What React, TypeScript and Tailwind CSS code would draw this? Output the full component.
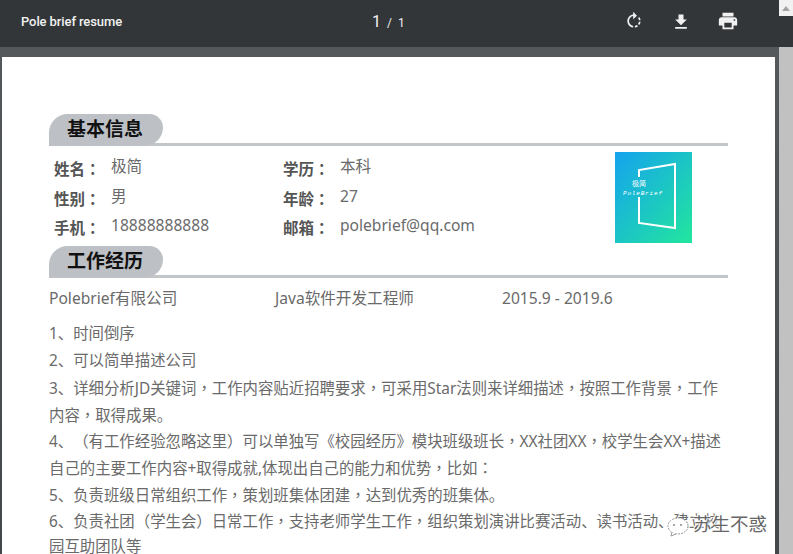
import type { ReactNode } from "react";

function Punct({ text }: { text: string }): ReactNode {
  return (
    <>
      {text.split(/([，：])/).map((part, i) =>
        part === "，" || part === "：" ? (
          <span key={i} className="[font-family:'Noto_Sans_CJK_TC',sans-serif]">{part}</span>
        ) : (
          <span key={i}>{part}</span>
        )
      )}
    </>
  );
}

function Heading({ children }: { children: string }) {
  return (
    <div className="border-b-[3px] border-[#c3c6c9] h-[32px]">
      <div className="w-[114px] h-[32px] bg-[#bdc1c5] rounded-tl-[22px] rounded-br-[22px] rounded-tr-[16px] pl-[18px] text-[19px] font-bold leading-[30px] text-[#111]">
        {children}
      </div>
    </div>
  );
}

function Info({ label, value, wide }: { label: string; value: string; wide?: boolean }) {
  return (
    <div className={`flex h-[29.5px] ${wide ? "w-[332px]" : "w-[229px]"}`}>
      <span className="w-[57px] h-[24px] text-[15.5px] font-bold text-[#555] pt-[2px] leading-[24px]">
        <Punct text={label} />
      </span>
      <span className="h-[24px] text-[15.6px] text-[#6a6a6a] leading-[24px]">{value}</span>
    </div>
  );
}

const lines = [
  "1、时间倒序",
  "2、可以简单描述公司",
  "3、详细分析JD关键词，工作内容贴近招聘要求，可采用Star法则来详细描述，按照工作背景，工作",
  "内容，取得成果。",
  "4、（有工作经验忽略这里）可以单独写《校园经历》模块班级班长，XX社团XX，校学生会XX+描述",
  "自己的主要工作内容+取得成就,体现出自己的能力和优势，比如：",
  "5、负责班级日常组织工作，策划班集体团建，达到优秀的班集体。",
  "6、负责社团（学生会）日常工作，支持老师学生工作，组织策划演讲比赛活动、读书活动、建立校",
  "园互助团队等",
];

export default function App() {
  return (
    <div className="w-[793px] h-[554px] overflow-hidden flex flex-col bg-[#525659] relative [font-family:'Noto_Sans','Noto_Sans_CJK_SC',sans-serif] [text-spacing-trim:space-all]">
      <header className="h-[47px] shrink-0 bg-[#323639] flex items-center text-white relative [font-family:Roboto,sans-serif]">
        <div className="w-[372px] pl-[21px] pb-[3px] text-[13px] font-medium text-[#f1f1f1] tracking-[-0.1px]">
          Pole brief resume
        </div>
        <div className="flex items-baseline gap-[6px] pb-[3px] text-[#f1f1f1]">
          <span className="text-[16px]">1</span>
          <span className="text-[12px]">/</span>
          <span className="text-[12px]">1</span>
        </div>
        <svg className="absolute left-[624px] top-[11px]" width="20" height="20" viewBox="0 0 24 24" fill="#f1f1f1">
          <path d="M15.55 5.55L11 1v3.07C7.06 4.56 4 7.92 4 12s3.05 7.44 7 7.93v-2.02c-2.84-.48-5-2.94-5-5.91s2.16-5.43 5-5.91V10l4.55-4.45zM19.93 11c-.17-1.39-.72-2.73-1.62-3.89l-1.42 1.42c.54.75.88 1.6 1.02 2.47h2.02zM13 17.9v2.02c1.39-.17 2.74-.71 3.9-1.61l-1.44-1.44c-.75.54-1.59.89-2.46 1.03zm3.89-2.42l1.42 1.41c.9-1.16 1.45-2.5 1.62-3.89h-2.02c-.14.87-.48 1.72-1.02 2.48z" />
        </svg>
        <svg className="absolute left-[671px] top-[12px]" width="20" height="20" viewBox="0 0 24 24" fill="#f1f1f1">
          <path d="M19 9h-4V3H9v6H5l7 7 7-7zM5 18v2h14v-2H5z" />
        </svg>
        <svg className="absolute left-[717px] top-[10px]" width="22" height="22" viewBox="0 0 24 24" fill="#f1f1f1">
          <path d="M19 8H5c-1.66 0-3 1.34-3 3v6h4v4h12v-4h4v-6c0-1.66-1.34-3-3-3zm-3 11H8v-5h8v5zm3-7c-.55 0-1-.45-1-1s.45-1 1-1 1 .45 1 1-.45 1-1 1zm-1-9H6v4h12V3z" />
        </svg>
      </header>
      <div className="flex-1 flex min-h-0">
        <div className="flex-1 min-w-0 bg-gradient-to-b from-[#55585b] to-[#44474a] pt-[10px] pl-[2px] pr-[4px]">
          <div className="h-full bg-white pt-[57px] px-[47px] overflow-hidden">
            <Heading>基本信息</Heading>
            <div className="flex justify-between h-[100px] relative">
              <div className="pl-[5px] pt-[8px] flex flex-col">
                <div className="flex"><Info label="姓名：" value="极简" /><Info label="学历：" value="本科" wide /></div>
                <div className="flex"><Info label="性别：" value="男" /><Info label="年龄：" value="27" wide /></div>
                <div className="flex"><Info label="手机：" value="18888888888" /><Info label="邮箱：" value="polebrief@qq.com" wide /></div>
              </div>
              <svg className="absolute left-[566px] top-[6px]" width="77" height="91" viewBox="0 0 77 91">
                <defs>
                  <linearGradient id="g" x1="0" y1="0" x2="1" y2="1">
                    <stop offset="0" stopColor="#15a3ee" />
                    <stop offset="1" stopColor="#22e69d" />
                  </linearGradient>
                </defs>
                <rect width="77" height="91" fill="url(#g)" />
                <path d="M24 25V18L60 12V76L24 71V45" fill="none" stroke="#fff" strokeWidth="2" />
                <text x="17" y="34" fontSize="7" fill="#fff">极简</text>
                <text x="8" y="43" fontSize="6" fill="#fff" fontStyle="italic" textLength="39" fontFamily="Liberation Mono">PoleBrief</text>
              </svg>
            </div>
            <Heading>工作经历</Heading>
            <div className="flex text-[15.6px] text-[#6a6a6a] leading-[26px] pt-[7px]">
              <span className="w-[226px]">Polebrief有限公司</span>
              <span className="w-[227px]">Java软件开发工程师</span>
              <span>2015.9 - 2019.6</span>
            </div>
            <div className="mt-[10px] text-[15.4px] text-[#6a6a6a] whitespace-nowrap">
              {lines.map((l) => (
                <div key={l} className="h-[26.6px] leading-[26.6px]"><Punct text={l} /></div>
              ))}
            </div>
          </div>
        </div>
        <div className="w-[14px] shrink-0 bg-[#c1c1c1]" />
      </div>
      <div className="absolute right-0 top-0 w-[14px] h-[16px] bg-[#f1f1f1] flex items-center justify-center">
        <div className="w-0 h-0 border-x-[4px] border-x-transparent border-b-[5px] border-b-[#a3a3a3]" />
      </div>
      <div className="absolute left-[666px] top-[510px] flex items-center text-[18.5px] text-[#666] [text-shadow:1px_1px_1px_#fff,-1px_-1px_1px_#fff] leading-none">
        <svg width="24" height="22" viewBox="0 0 24 22" className="mt-[6px]">
          <ellipse cx="12" cy="10" rx="10" ry="8" fill="#fff" stroke="#999" strokeWidth="1" strokeDasharray="2 1" />
          <path d="M6 16l-1 4 5-2" fill="#fff" stroke="#999" strokeWidth="1" />
          <circle cx="8" cy="9" r="1" fill="#888" />
          <circle cx="15" cy="9" r="1" fill="#888" />
        </svg>
        <span className="ml-[3px]">苏生不惑</span>
      </div>
    </div>
  );
}
